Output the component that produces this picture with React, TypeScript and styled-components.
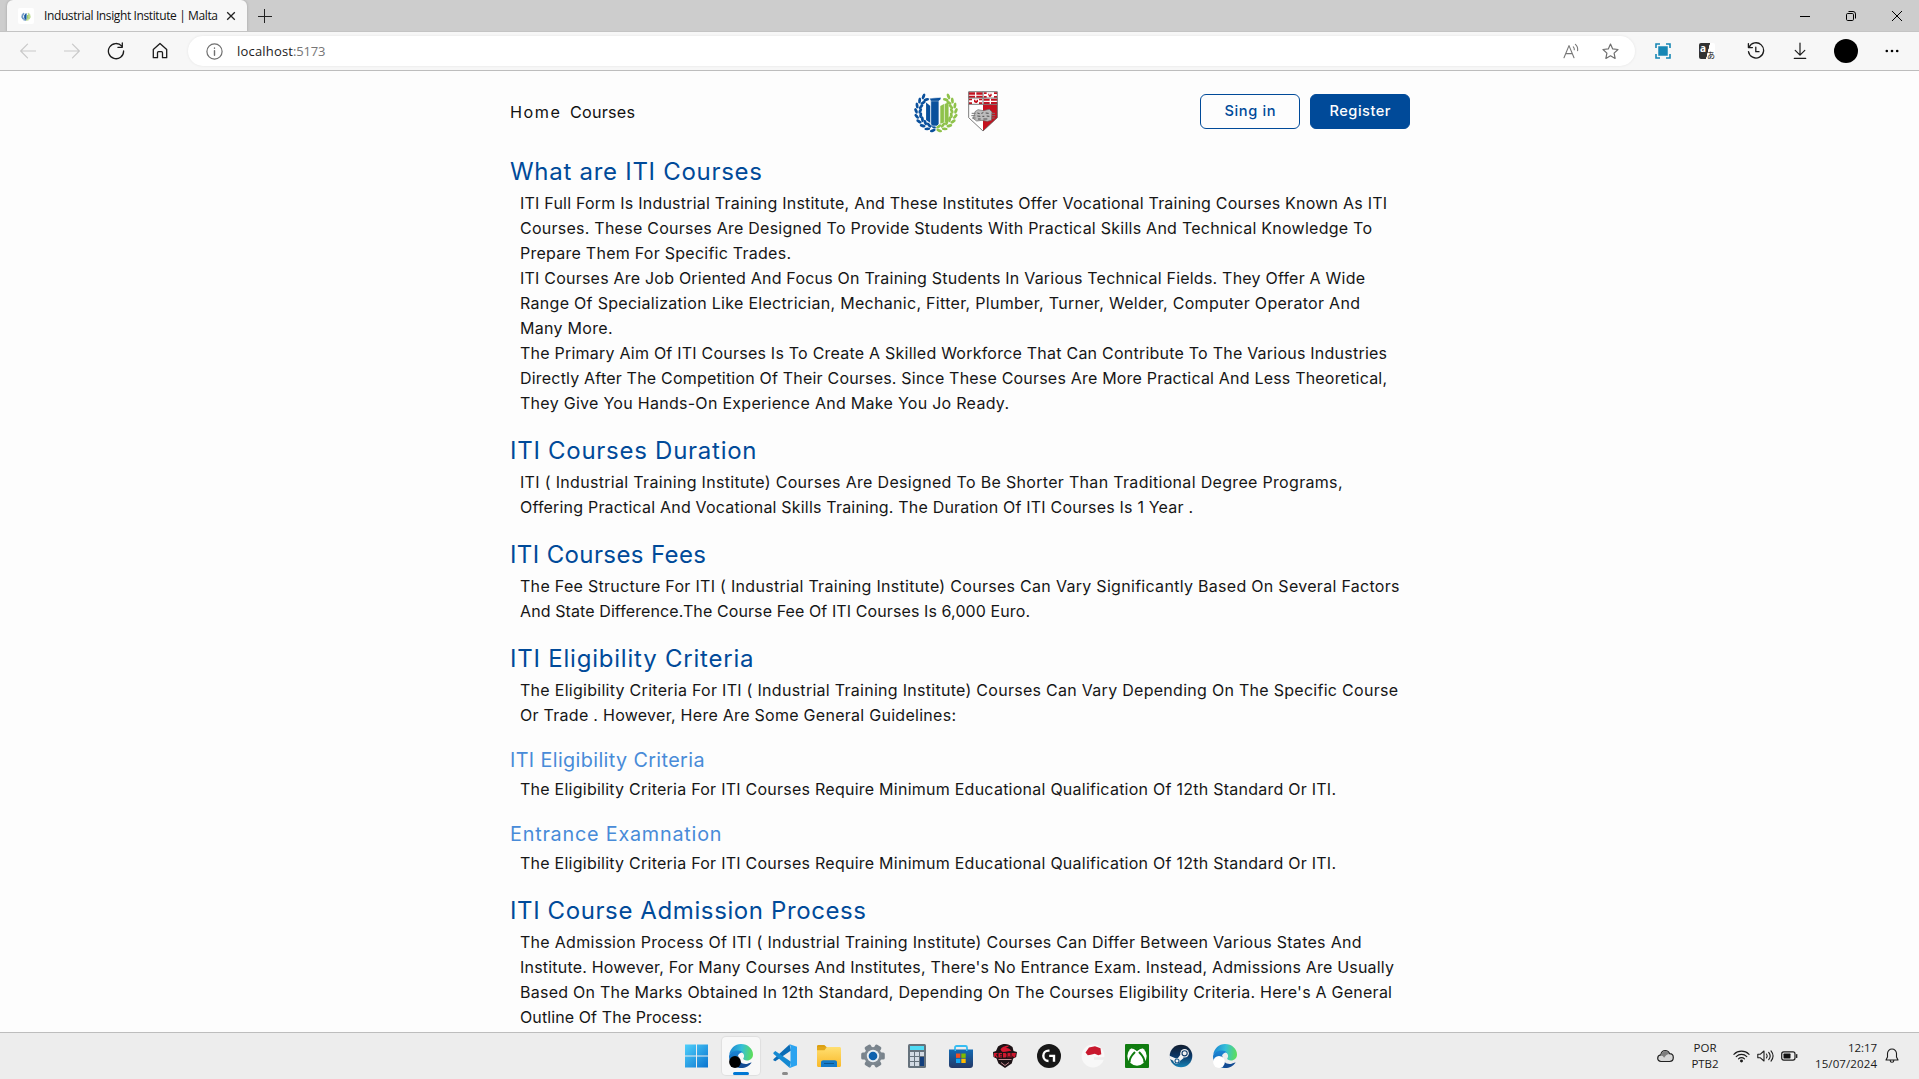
import React, { useLayoutEffect, useRef, useState } from "react";
import styled, { createGlobalStyle } from "styled-components";

const GlobalStyle = createGlobalStyle`
  * { box-sizing: border-box; }
  html, body { margin: 0; padding: 0; overflow: hidden; background: #fdfdfd; }
  svg { display: block; }
`;

const BLUE = "#004a99";
const UI_FONT = `"Open Sans", "Noto Sans", sans-serif`;
const TEXT_FONT = `Inter, "Liberation Sans", sans-serif`;

const Screen = styled.div`
  width: 1919px;
  height: 1079px;
  display: flex;
  flex-direction: column;
  overflow: hidden;
`;

/* ---------- text with a fixed advance width ---------- */

const FitSpan = styled.span`
  display: inline-block;
  white-space: pre;
`;

function Fit({ width, children }: { width: number; children: string }) {
  const ref = useRef<HTMLSpanElement>(null);
  const [spacing, setSpacing] = useState(0);
  useLayoutEffect(() => {
    if (!ref.current) return;
    const natural = ref.current.getBoundingClientRect().width;
    setSpacing((width - natural) / Math.max(1, children.length - 1));
  }, [width, children]);
  return (
    <FitSpan ref={ref} style={{ letterSpacing: spacing, marginRight: -spacing }}>
      {children}
    </FitSpan>
  );
}

/* ---------- browser chrome ---------- */

const TabStrip = styled.div`
  display: flex;
  height: 32px;
  padding-left: 7px;
  background: #cdcdcd;
`;

const Tab = styled.div`
  display: flex;
  align-items: center;
  width: 240px;
  height: 32px;
  padding-left: 11px;
  background: #f7f7f7;
  border-radius: 6px 6px 0 0;
  box-shadow: 0 0 3px rgba(0, 0, 0, 0.22);
  font: 400 12px/16px ${UI_FONT};
  color: #111;
`;

const Favicon = styled.div`
  display: grid;
  place-items: center;
  width: 16px;
  height: 16px;
  margin-right: 10px;
  border-radius: 2px;
  background: #fff;
`;

const TabClose = styled.div`
  margin-left: 8px;
`;

const NewTab = styled.div`
  display: grid;
  place-items: center;
  width: 35px;
  height: 32px;
`;

const WindowButtons = styled.div`
  display: flex;
  margin-left: auto;
  margin-right: -1px;
`;

const WindowButton = styled.div`
  display: grid;
  place-items: center;
  width: 46px;
  height: 32px;
`;

const Toolbar = styled.div`
  display: flex;
  align-items: center;
  height: 39px;
  padding: 0 4px 0 6px;
  background: #f7f7f7;
  border-bottom: 1px solid #bdbdbd;
  box-shadow: 0 -1px 0 #c4c4c4;
`;

const ToolSlot = styled.div<{ $w?: number }>`
  display: grid;
  place-items: center;
  flex: none;
  width: ${(p) => p.$w ?? 44}px;
  height: 36px;
`;

const AddressBar = styled.div`
  display: flex;
  flex: none;
  align-items: center;
  width: 1447px;
  height: 30px;
  margin: 0 6px;
  padding: 0 5px 0 18px;
  border-radius: 15px;
  background: #fff;
  box-shadow: 0 0 3px rgba(0, 0, 0, 0.08);
  font: 400 13px/18px ${UI_FONT};
  color: #1b1b1b;
`;

const Url = styled.div`
  display: flex;
  margin-left: 14px;
`;

const Port = styled.span`
  color: #767676;
`;

const AddressActions = styled.div`
  display: flex;
  margin-left: auto;
`;

const Divider = styled.div`
  width: 1px;
  height: 16px;
  margin: 0 3px 0 2px;
  background: #c8c8c8;
`;

const Avatar = styled.div`
  width: 24px;
  height: 24px;
  border-radius: 50%;
  background: #000;
`;

/* ---------- page ---------- */

const Page = styled.main`
  flex: 1;
  min-height: 0;
  overflow: hidden;
  background: #fdfdfd;
  font-family: ${TEXT_FONT};
`;

const Container = styled.div`
  width: 900px;
  margin: 0 auto 0 510px;
`;

const Header = styled.header`
  display: grid;
  grid-template-columns: 403px 1fr 210px;
  align-items: center;
  height: 81px;
  margin-bottom: 5px;
`;

const Nav = styled.nav`
  display: flex;
  gap: 10px;
  font-size: 16.2px;
  line-height: 20px;
  color: #111;
`;

const Logos = styled.div`
  display: flex;
  align-items: center;
  gap: 9px;
  padding-bottom: 1px;
`;

const Actions = styled.div`
  display: flex;
  gap: 10px;
`;

const Button = styled.button<{ $filled?: boolean }>`
  width: 100px;
  height: 35px;
  padding: 0 0 1px;
  border: 1px solid ${BLUE};
  border-radius: 6px;
  background: ${(p) => (p.$filled ? BLUE : "#fdfdfd")};
  color: ${(p) => (p.$filled ? "#fdfdfd" : BLUE)};
  font: 500 14.6px/18px ${TEXT_FONT};
`;

const Title = styled.h2`
  margin: 0 0 5px;
  height: 29px;
  font-size: 24px;
  line-height: 29px;
  font-weight: 400;
  color: ${BLUE};
`;

const Subtitle = styled.h3`
  margin: 0 0 5px;
  height: 24px;
  font-size: 19.8px;
  line-height: 24px;
  font-weight: 400;
  color: #488bd8;
`;

const Copy = styled.div`
  display: flex;
  flex-direction: column;
  margin-bottom: 20px;
  padding-left: 10px;
  font-size: 16px;
  line-height: 25px;
  color: #161616;
`;

const CopyLine = styled.div`
  height: 25px;
`;

/* ---------- taskbar ---------- */

const Taskbar = styled.footer`
  display: grid;
  grid-template-columns: 675px 572px 1fr;
  height: 47px;
  background: #ededed;
  border-top: 1px solid #bdbdbd;
`;

const Apps = styled.div`
  grid-column: 2;
  display: flex;
  align-items: center;
`;

const AppSlot = styled.div`
  display: grid;
  place-items: center;
  position: relative;
  width: 44px;
  height: 46px;
`;

const AppTile = styled.div<{ $active?: boolean }>`
  display: grid;
  place-items: center;
  width: 38px;
  height: 38px;
  border-radius: 4px;
  background: ${(p) => (p.$active ? "#f8f8f8" : "transparent")};
  box-shadow: ${(p) => (p.$active ? "0 0 1px 1px rgba(0,0,0,0.06)" : "none")};
`;

const Marker = styled.div<{ $active?: boolean }>`
  position: absolute;
  bottom: 4px;
  left: 50%;
  transform: translateX(-50%);
  width: ${(p) => (p.$active ? 16 : 6)}px;
  height: 3px;
  border-radius: 2px;
  background: ${(p) => (p.$active ? "#0078d4" : "#8a8a8a")};
`;

const Tray = styled.div`
  display: flex;
  align-items: center;
  justify-content: flex-end;
  padding-right: 20px;
  font: 400 11.5px/16px ${UI_FONT};
  color: #1a1a1a;
`;

const TrayIcon = styled.div<{ $mr: number }>`
  margin-right: ${(p) => p.$mr}px;
`;

const TrayText = styled.div<{ $align: string; $w: number; $mr: number }>`
  display: flex;
  flex-direction: column;
  align-items: ${(p) => p.$align};
  width: ${(p) => p.$w}px;
  margin-right: ${(p) => p.$mr}px;
`;

/* ---------- logos ---------- */

type Pt = { x: number; y: number; a: number };

function arc(side: 1 | -1): Pt[] {
  const pts: Pt[] = [];
  for (let i = 0; i < 9; i++) {
    const deg = -50 + i * 16.5;
    const t = (deg * Math.PI) / 180;
    pts.push({ x: 167 + side * 54 * Math.cos(t), y: 109 + 52 * Math.sin(t), a: deg });
  }
  return pts;
}

function Wreath({ side, color }: { side: 1 | -1; color: string }) {
  return (
    <g fill={color}>
      {arc(side).map((p, i) => {
        const base = side === 1 ? p.a - 90 : 270 - p.a;
        return (
          <g key={i} transform={`translate(${p.x} ${p.y}) rotate(${base})`}>
            <ellipse cx="4" cy="-5" rx="9" ry="4.400" transform="rotate(-26)" />
            <ellipse cx="4" cy="5" rx="9" ry="4.400" transform="rotate(26)" />
          </g>
        );
      })}
    </g>
  );
}

const InstituteLogo = ({ w = 46, h = 43 }: { w?: number; h?: number }) => (
  <svg width={w} height={h} viewBox="98 44 138 130">
    <Wreath side={-1} color="#0a509c" />
    <Wreath side={1} color="#8fc24b" />
    <path d="M137 82l13 10v52l-13-9z" fill="#0a509c" />
    <path d="M205 81l-12 5v56l12-6zM191 86l-11 6v54l11-4z" fill="#8fc24b" />
    <path d="M147 69l35-3v6l-6 5v70l-6 6h-14l-5-6V78z" fill="#0a509c" stroke="#fdfdfd" strokeWidth="2" />
    <path d="M151 77.500h25" stroke="#fdfdfd" strokeWidth="1" />
  </svg>
);

const ShieldLogo = () => (
  <svg width="30" height="41" viewBox="264 46 90 123">
    <path d="M266 86h43v80l-43-40z" fill="#fff" />
    <path d="M309 86h43v40l-43 40z" fill="#c4121f" />
    <path d="M266 48h86v38h-86z" fill="#fff" />
    <g fill="#c4121f">
      <path d="M266 50h19v7h-19zM289 50h19v7h-19zM266 60h19v6h-19zM289 60h19v6h-19z" />
      <path d="M311 69h18v6h-18zM333 69h19v6h-19zM311 79h18v6h-18zM333 79h19v6h-19z" />
      <path d="M312 50h8v5h-8zM342 50h9v5h-9zM312 61h8v5h-8zM342 61h9v5h-9zM324 54h4v4h3v-4h4v6l-4 4-4-1z" />
      <path d="M267 69h9v5h-9zM297 69h9v5h-9zM267 80h9v5h-9zM297 80h9v5h-9zM282 72h4v3h4v-3h4v6l-4 4-5-1-3-3z" />
    </g>
    <path d="M266 48h86v78l-43 40-43-40zM309 48v38M266 67h86M266 86h86" fill="none" stroke="#5d5d5d" strokeWidth="2.4" />
    <path d="M285 108l9-6 16 3 18-4 8 8-2 25-12 3-16-3-16 2-10-7z" fill="#bdbdbd" stroke="#666" strokeWidth="2" />
    <path d="M275 113h12M274 120h12M276 127h11M335 113h10M336 120h10M334 127h10" stroke="#777" strokeWidth="3" />
    <path d="M292 112l7 2M304 113l6-2M317 112l9 1M292 121l9 1M307 122h6M320 121l8 1M294 130h8M310 130h12" stroke="#4e4e4e" strokeWidth="3" />
  </svg>
);

/* ---------- toolbar icons ---------- */

const line = { fill: "none", stroke: "#1b1b1b", strokeWidth: 1.2, strokeLinecap: "round", strokeLinejoin: "round" } as const;

const BackIcon = () => (
  <svg width="16" height="16" viewBox="0 0 16 16" {...line} stroke="#c9c9c9"><path d="M15.500 8H.8M7.500 1.200L.7 8l6.800 6.800" /></svg>
);
const ForwardIcon = () => (
  <svg width="16" height="16" viewBox="0 0 16 16" {...line} stroke="#c9c9c9"><path d="M.5 8h14.700M8.500 1.200L15.300 8l-6.800 6.800" /></svg>
);
const ReloadIcon = () => (
  <svg width="18" height="18" viewBox="0 0 18 18" {...line} strokeWidth={1.3}><path d="M16.600 9A7.600 7.600 0 1 1 14.800 4.200M15.300.9v4.400h-4.400" /></svg>
);
const HomeIcon = () => (
  <svg width="16" height="18" viewBox="0 0 16 18" {...line} strokeWidth={1.3}><path d="M1.300 7.400L8 1.400l6.700 6v8.300h-4.200v-5a1 1 0 0 0-1-1h-3a1 1 0 0 0-1 1v5H1.300z" /></svg>
);
const InfoIcon = () => (
  <svg width="17" height="17" viewBox="0 0 17 17" {...line} stroke="#6f6f6f"><circle cx="8.500" cy="8.500" r="7.600" /><path d="M8.500 7.600v4.600M8.500 4.900v.3" strokeWidth="1.400" /></svg>
);
const ReadAloudIcon = () => (
  <svg width="17" height="16" viewBox="0 0 17 16" {...line} strokeWidth={1.1} stroke="#777"><path d="M1 14.800L6 2.600l5 12.200M2.800 10.600h6.400M10.300 3.900c.8.800 1.100 1.700 1 2.900M12.400 1.300c1.900 1.700 2.600 3.700 2.200 6.400" /></svg>
);
const StarIcon = () => (
  <svg width="17" height="17" viewBox="0 0 17 17" {...line} stroke="#6f6f6f"><path d="M8.500 1.100l2.200 4.800 5.300.6-3.900 3.600 1 5.300-4.600-2.600-4.600 2.600 1-5.300L1 6.500l5.300-.6z" /></svg>
);
const CaptureIcon = () => (
  <svg width="16" height="16" viewBox="0 0 16 16"><path d="M1 5V1h4M11 1h4v4M15 11v4h-4M5 15H1v-4" fill="none" stroke="#1787b5" strokeWidth="1.600" /><path d="M3.500 3.500h9v9h-9z" fill="#1787b5" stroke="#1787b5" strokeOpacity=".5" /></svg>
);
const TranslateGlyph = styled.div`
  position: relative;
  display: flex;
  width: 16px;
  height: 16px;
  background: linear-gradient(104deg, #333 0 54%, #fff 56%);
  border-radius: 2px;
  font: 700 10px/10px ${UI_FONT};
  color: #fff;
  padding-left: 1px;
`;
const TranslateKana = styled.span`
  position: absolute;
  right: 0;
  bottom: 0;
  font: 500 8px/9px "Noto Sans CJK JP", sans-serif;
  color: #444;
`;
const HistoryIcon = () => (
  <svg width="18" height="18" viewBox="0 0 18 18" {...line} strokeWidth={1.3}><path d="M2.100 5.200A7.600 7.600 0 1 1 1.500 9.600M1.400 1.600v4h4M8.800 5.200v4.500h3.200" /></svg>
);
const DownloadIcon = () => (
  <svg width="14" height="18" viewBox="0 0 14 18" {...line} strokeWidth={1.2}><path d="M7 1v12M2.200 8.400L7 13.200l4.800-4.800M1.300 16.400h11.400" /></svg>
);
const MoreIcon = () => (
  <svg width="14" height="4" viewBox="0 0 14 4"><circle cx="1.800" cy="2" r="1.300" /><circle cx="7" cy="2" r="1.300" /><circle cx="12.200" cy="2" r="1.300" /></svg>
);

/* ---------- taskbar icons ---------- */

const StartIcon = () => (
  <svg width="24" height="24" viewBox="0 0 24 24">
    <defs><linearGradient id="win" x1="0" y1="0" x2="1" y2="1" gradientUnits="objectBoundingBox"><stop offset="0" stopColor="#4fd0fb" /><stop offset="1" stopColor="#0a73cf" /></linearGradient></defs>
    <path d="M0 .6h11v11H0zM12 .6h11v11H12zM0 12.500h11v11H0zM12 12.500h11v11H12z" fill="url(#win)" />
  </svg>
);
const EdgeIcon = ({ id, dot }: { id: string; dot: string }) => (
  <svg width="24" height="24" viewBox="0 0 24 24">
    <defs>
      <linearGradient id={`${id}a`} x1="0" y1=".4" x2="1" y2=".5"><stop offset="0" stopColor="#1a86d2" /><stop offset=".5" stopColor="#35bfd8" /><stop offset="1" stopColor="#5ede58" /></linearGradient>
      <linearGradient id={`${id}b`} x1="0" y1="0" x2="0" y2="1"><stop offset="0" stopColor="#1c86d6" /><stop offset="1" stopColor="#0c5aa8" /></linearGradient>
    </defs>
    <path d="M.3 10.800C1 4.600 5.900 0 12 0c7 0 12 4.900 12 10.400 0 3.500-2.600 6-6 6-2.600 0-3.800-1-3.800-1.700 0-.6.9-1 .9-2.800 0-2.500-2.500-4.400-6-4.400-4.500 0-7.900 1.500-8.800 3.300z" fill={`url(#${id}a)`} />
    <path d="M0 12.500C.2 8.900 4 6.500 8.800 6.500c2.300 0 4.200.7 5.300 2-3-.6-5.700 2.200-5.700 5.900 0 5.300 5.300 8 10.100 7.100A12 12 0 0 1 12 24C5.300 24 0 18.900 0 12.500z" fill={`url(#${id}b)`} />
    <path d="M9.600 11.500c-1.700 5 3.400 9.500 9 8.200 1.600-.4 2.700-1 3.400-1.200.4-.1.600.2.300.6A12 12 0 0 1 12 24c-5-1-6.500-8.500-2.400-12.500z" fill="#134c94" />
    <circle cx="6" cy="18" r="5.900" fill={dot} />
  </svg>
);
const CodeIcon = () => (
  <svg width="24" height="24" viewBox="0 0 24 24">
    <path d="M.4 15.200L16.500.4 18 6.400 2.300 17.200.4 16.300z" fill="#0b6cb5" />
    <path d="M.4 8.700L2.300 7 18 17.800 16.500 23.700.4 9.800z" fill="#158ad2" />
    <path d="M16.800.2L24 2.800v18.400l-7.200 2.700c-.5.1-.6-.2-.3-.6.7-.5 1-1 1-2V3c0-1-.3-1.600-1-2.200z" fill="#2ba3f0" />
  </svg>
);
const FolderIcon = () => (
  <svg width="24" height="22" viewBox="0 0 24 22">
    <defs><linearGradient id="fold" x1="0" y1="0" x2="0" y2="1"><stop offset="0" stopColor="#ffdf71" /><stop offset="1" stopColor="#f9b92a" /></linearGradient></defs>
    <path d="M0 1.400C0 .6.600 0 1.400 0h6L10 2.500H0z" fill="#dca011" /><path d="M0 2h10v4H0z" fill="#e2a71a" />
    <path d="M0 5.300h7.500l2.300-3.200h12.700c.9 0 1.500.6 1.500 1.500V20.500c0 .9-.6 1.500-1.500 1.500h-21C.6 22 0 21.400 0 20.500z" fill="url(#fold)" />
    <path d="M4 22v-4.500c0-1.400 1-2.300 2.300-2.300h11.400c1.300 0 2.300.9 2.300 2.300V22z" fill="#157bc8" /><path d="M7 18.500h10" stroke="#0a568f" />
  </svg>
);
const GearIcon = () => (
  <svg width="24" height="24" viewBox="0 0 24 24">
    {[0, 60, 120].map((a) => (
      <rect key={a} x="8.500" y=".2" width="7" height="23.600" rx="1.600" fill="#79838c" transform={`rotate(${a + 30} 12 12)`} />
    ))}
    <circle cx="12" cy="12" r="9" fill="#7d8790" /><circle cx="12" cy="12" r="6.200" fill="#e9eef2" /><circle cx="12" cy="12" r="4.300" fill="#0f62ae" />
  </svg>
);
const CalcIcon = () => (
  <svg width="18" height="24" viewBox="0 0 18 24">
    <rect width="18" height="24" rx="1.500" fill="#66727c" /><rect x="2" y="2" width="14" height="4" fill="#4fdcf5" />
    {[0, 1, 2].map((r) => [0, 1, 2].map((c) => (
      <rect key={`${r}${c}`} x={2 + c * 5} y={8 + r * 5} width="4" height="4" fill={c === 2 && r > 0 ? "#123f7d" : "#d2dae3"} />
    )))}
    <rect x="12" y="13" width="4" height="9" fill="#123f7d" />
  </svg>
);
const StoreIcon = () => (
  <svg width="24" height="24" viewBox="0 0 24 24">
    <defs><linearGradient id="store" x1="0" y1="0" x2="0" y2="1"><stop offset="0" stopColor="#126ab4" /><stop offset="1" stopColor="#243866" /></linearGradient></defs>
    <path d="M6 7V3.500C6 2.500 6.700 2 7.500 2h9c.8 0 1.500.5 1.500 1.500V7" fill="none" stroke="#36bdf2" strokeWidth="1.800" />
    <path d="M0 5.500h24V21c0 1.700-1.100 3-3 3H3c-1.900 0-3-1.300-3-3z" fill="url(#store)" />
    <path d="M5.500 5H7v2H5.500zM17 5h1.500v2H17z" fill="#36bdf2" />
    <path d="M7 9.500h4.400v4.400H7z" fill="#f25022" /><path d="M12.300 9.500h4.400v4.400h-4.400z" fill="#7fba00" /><path d="M7 14.700h4.400v4.300H7z" fill="#16a6f0" /><path d="M12.300 14.700h4.400v4.300h-4.400z" fill="#ffb900" />
  </svg>
);
const RedragonIcon = () => (
  <svg width="24" height="24" viewBox="0 0 24 24">
    <path d="M5 2.500C8 .3 10 0 12 0c3 0 5 1 7.500 3l1 4 3.500 1-.8 5-3 1.500-1.500 5L12 24l-6.500-4.500-2-5L.5 13 0 8l3-1z" fill="#1d1316" />
    <path d="M7.500 5.500C9.500 2 13.500 2 16 1.500c-.5 1.800-2 1.600-3.500 2.500C15 3.500 17.500 5 18.500 7.300 15 6.300 13.800 8.300 9 7.800z" fill="#d81932" />
    <path d="M1 9h3.500v1L3 10.500l2 3H3.500L2 11.600V13H1zM5.500 9H9v1H7v.7h2v1H7v.7h2v1H5.500zM10 9h2.500l1 1v2.500l-1 .9H10zM14.500 9h3v4.400h-1V12h-1v1.400h-1zM18.500 9H23l-1 4.400h-1l-1.700-2v2h-.8z" fill="#d0172e" />
    <path d="M5.500 15.500h13M8 18.500l4 3 4-3" fill="none" stroke="#c68a92" strokeWidth="1" />
  </svg>
);
const LogitechIcon = () => (
  <svg width="24" height="24" viewBox="0 0 24 24"><circle cx="12" cy="12" r="12" fill="#181818" /><path d="M12.500 6.600h-1A5.200 5.200 0 0 0 11.500 17M12.200 11.900h4.800v5.800" fill="none" stroke="#fff" strokeWidth="2.400" /></svg>
);
const RedHatIcon = () => (
  <svg width="24" height="24" viewBox="0 0 24 24"><circle cx="12" cy="12" r="11.400" fill="#f8f8f8" /><path d="M13 14.500h11" stroke="#ededed" strokeWidth="2.500" /><path d="M4.500 8.500L8 3.500l6-1.200 5.500 2 .8 6-3 1-3.500-1.500-4 1-3 .5z" fill="#c8182d" /></svg>
);
const XboxIcon = () => (
  <svg width="24" height="24" viewBox="0 0 24 24"><rect width="24" height="24" rx="1" fill="#107c10" /><circle cx="12" cy="12" r="9.700" fill="#fff" /><path d="M6.500 3.500c2 0 4 1.200 5.500 2.400 1.500-1.200 3.500-2.400 5.500-2.400M10 8C6.500 11.500 4 15.500 4.600 18.600M14 8c3.500 3.500 6 7.500 5.400 10.600" fill="none" stroke="#107c10" strokeWidth="2" /><path d="M7 2.600L12 5.300l5-2.700-5-1.700z" fill="#107c10" /></svg>
);
const SteamIcon = () => (
  <svg width="24" height="24" viewBox="0 0 24 24">
    <defs><linearGradient id="steam" x1="0" y1="0" x2="0" y2="1"><stop offset="0" stopColor="#111d2e" /><stop offset=".5" stopColor="#0c3766" /><stop offset="1" stopColor="#1683b6" /></linearGradient></defs>
    <circle cx="12" cy="12" r="11.300" fill="url(#steam)" />
    <path d="M0 11.600l7 2.800 2-.5 3.200-4.500 2.500 4.500-3.700 3-1 2-2.500 1-2.500-1.200-.8-2L.9 15z" fill="#f3f3f3" />
    <circle cx="15.600" cy="9.300" r="4.300" fill="#f3f3f3" /><circle cx="15.600" cy="9.300" r="2.600" fill="none" stroke="#103a68" strokeWidth="1.100" /><circle cx="8" cy="17" r="2" fill="none" stroke="#13558a" strokeWidth="1.100" />
  </svg>
);

const dark = { fill: "none", stroke: "#1c1c1c", strokeWidth: 1.1, strokeLinecap: "round", strokeLinejoin: "round" } as const;

const CloudIcon = () => (
  <svg width="17" height="14" viewBox="0 0 17 14"><path d="M4 12.500C2 12.500.7 11 .7 9.200S2 6 3.800 5.800C4.200 3.200 6 1.500 8.300 1.500c2 0 3.600 1.200 4.300 3.200 2.200 0 3.700 1.800 3.700 3.900 0 2.300-1.600 3.900-3.700 3.900z" fill="#d6d6d6" stroke="#222" strokeWidth="1.200" /><path d="M3.900 6.500C4.600 3.500 6.500 2 8.300 2c1.700 0 3.200 1 3.800 3-2.400.4-3.700 2-5 3.700C6.300 7.200 5 6.500 3.900 6.500z" fill="#7d7d7d" /></svg>
);
const WifiIcon = () => (
  <svg width="17" height="14" viewBox="0 0 17 14" {...dark}><path d="M.9 5.300a10.800 10.800 0 0 1 15.200 0M3.200 7.600a7.500 7.500 0 0 1 10.600 0M5.500 9.900a4.200 4.200 0 0 1 6 0" /><circle cx="8.500" cy="12" r=".9" fill="#1c1c1c" /></svg>
);
const SpeakerIcon = () => (
  <svg width="17" height="14" viewBox="0 0 17 14" {...dark}><path d="M.8 5.200v3.600h2.600L7 12V2L3.400 5.200zM9.400 5c.9 1.200.9 2.800 0 4M11.700 3.400c1.800 2.200 1.800 5 0 7.200M14 1.900c2.600 3.200 2.600 7 0 10.200" /></svg>
);
const BatteryIcon = () => (
  <svg width="17" height="10" viewBox="0 0 17 10"><rect x=".7" y=".9" width="13.300" height="8.200" rx="2" fill="none" stroke="#1c1c1c" strokeWidth="1.200" /><rect x="2.500" y="2.600" width="7" height="4.800" rx=".6" fill="#111" /><path d="M15.700 3.600v2.800" stroke="#1c1c1c" strokeWidth="1.300" strokeLinecap="round" /></svg>
);
const BellIcon = () => (
  <svg width="14" height="16" viewBox="0 0 14 16" {...dark}><path d="M7 1a4.500 4.500 0 0 0-4.500 4.500V9L1 12h12l-1.500-3V5.500A4.500 4.500 0 0 0 7 1zM5.200 12.500a1.800 1.800 0 0 0 3.600 0" /></svg>
);

/* ---------- content ---------- */

type Block = { title: string; width: number; sub?: boolean; lines: [string, number][] };

const blocks: Block[] = [
  {
    title: "What are ITI Courses", width: 252,
    lines: [
      ["ITI Full Form Is Industrial Training Institute, And These Institutes Offer Vocational Training Courses Known As ITI", 867],
      ["Courses. These Courses Are Designed To Provide Students With Practical Skills And Technical Knowledge To", 852],
      ["Prepare Them For Specific Trades.", 271],
      ["ITI Courses Are Job Oriented And Focus On Training Students In Various Technical Fields. They Offer A Wide", 845],
      ["Range Of Specialization Like Electrician, Mechanic, Fitter, Plumber, Turner, Welder, Computer Operator And", 840],
      ["Many More.", 92.5],
      ["The Primary Aim Of ITI Courses Is To Create A Skilled Workforce That Can Contribute To The Various Industries", 867],
      ["Directly After The Competition Of Their Courses. Since These Courses Are More Practical And Less Theoretical,", 867],
      ["They Give You Hands-On Experience And Make You Jo Ready.", 489],
    ],
  },
  {
    title: "ITI Courses Duration", width: 246.5,
    lines: [
      ["ITI ( Industrial Training Institute) Courses Are Designed To Be Shorter Than Traditional Degree Programs,", 822.5],
      ["Offering Practical And Vocational Skills Training. The Duration Of ITI Courses Is 1 Year .", 673],
    ],
  },
  {
    title: "ITI Courses Fees", width: 196,
    lines: [
      ["The Fee Structure For ITI ( Industrial Training Institute) Courses Can Vary Significantly Based On Several Factors", 879.5],
      ["And State Difference.The Course Fee Of ITI Courses Is 6,000 Euro.", 510],
    ],
  },
  {
    title: "ITI Eligibility Criteria", width: 243.5,
    lines: [
      ["The Eligibility Criteria For ITI ( Industrial Training Institute) Courses Can Vary Depending On The Specific Course", 878],
      ["Or Trade . However, Here Are Some General Guidelines:", 436],
    ],
  },
  {
    title: "ITI Eligibility Criteria", width: 194.5, sub: true,
    lines: [["The Eligibility Criteria For ITI Courses Require Minimum Educational Qualification Of 12th Standard Or ITI.", 816]],
  },
  {
    title: "Entrance Examnation", width: 211.5, sub: true,
    lines: [["The Eligibility Criteria For ITI Courses Require Minimum Educational Qualification Of 12th Standard Or ITI.", 816]],
  },
  {
    title: "ITI Course Admission Process", width: 356,
    lines: [
      ["The Admission Process Of ITI ( Industrial Training Institute) Courses Can Differ Between Various States And", 841.5],
      ["Institute. However, For Many Courses And Institutes, There's No Entrance Exam. Instead, Admissions Are Usually", 874],
      ["Based On The Marks Obtained In 12th Standard, Depending On The Courses Eligibility Criteria. Here's A General", 872],
      ["Outline Of The Process:", 182],
    ],
  },
];

const apps: { icon: React.ReactNode; state?: "active" | "open" }[] = [
  { icon: <StartIcon /> },
  { icon: <EdgeIcon id="e1" dot="#000" />, state: "active" },
  { icon: <CodeIcon />, state: "open" },
  { icon: <FolderIcon /> },
  { icon: <GearIcon /> },
  { icon: <CalcIcon /> },
  { icon: <StoreIcon /> },
  { icon: <RedragonIcon /> },
  { icon: <LogitechIcon /> },
  { icon: <RedHatIcon /> },
  { icon: <XboxIcon /> },
  { icon: <SteamIcon /> },
  { icon: <EdgeIcon id="e2" dot="#fff" /> },
];

export default function App() {
  return (
    <Screen>
      <GlobalStyle />
      <TabStrip>
        <Tab>
          <Favicon><InstituteLogo w={10} h={9} /></Favicon>
          <Fit width={174}>Industrial Insight Institute | Malta</Fit>
          <TabClose>
            <svg width="10" height="10" viewBox="0 0 10 10"><path d="M1.200 1.200l7.600 7.600M8.800 1.200L1.200 8.800" stroke="#222" strokeWidth="1.300" /></svg>
          </TabClose>
        </Tab>
        <NewTab>
          <svg width="14" height="14" viewBox="0 0 14 14"><path d="M6.500 0v14M0 7.500h14" stroke="#222" /></svg>
        </NewTab>
        <WindowButtons>
          <WindowButton><svg width="10" height="10" viewBox="0 0 10 10"><path d="M0 5.500h10" stroke="#000" /></svg></WindowButton>
          <WindowButton><svg width="10" height="10" viewBox="0 0 10 10" fill="none" stroke="#000"><rect x=".5" y="2.500" width="7" height="7" rx="1.200" /><path d="M2.500.5H7A2.500 2.500 0 0 1 9.500 3v4.500" /></svg></WindowButton>
          <WindowButton><svg width="10" height="10" viewBox="0 0 10 10"><path d="M0 0l10 10M10 0L0 10" stroke="#000" /></svg></WindowButton>
        </WindowButtons>
      </TabStrip>
      <Toolbar>
        <ToolSlot><BackIcon /></ToolSlot>
        <ToolSlot><ForwardIcon /></ToolSlot>
        <ToolSlot><ReloadIcon /></ToolSlot>
        <ToolSlot><HomeIcon /></ToolSlot>
        <AddressBar>
          <InfoIcon />
          <Url>
            <Fit width={56}>localhost</Fit>
            <Port><Fit width={32.5}>:5173</Fit></Port>
          </Url>
          <AddressActions>
            <ToolSlot $w={39}><ReadAloudIcon /></ToolSlot>
            <ToolSlot $w={39}><StarIcon /></ToolSlot>
          </AddressActions>
        </AddressBar>
        <ToolSlot><CaptureIcon /></ToolSlot>
        <ToolSlot><TranslateGlyph>a<TranslateKana>あ</TranslateKana></TranslateGlyph></ToolSlot>
        <Divider />
        <ToolSlot><HistoryIcon /></ToolSlot>
        <ToolSlot><DownloadIcon /></ToolSlot>
        <ToolSlot $w={47}><Avatar /></ToolSlot>
        <ToolSlot $w={46}><MoreIcon /></ToolSlot>
      </Toolbar>
      <Page>
        <Container>
          <Header>
            <Nav>
              <Fit width={50}>Home</Fit>
              <Fit width={65}>Courses</Fit>
            </Nav>
            <Logos>
              <InstituteLogo />
              <ShieldLogo />
            </Logos>
            <Actions>
              <Button><Fit width={51}>Sing in</Fit></Button>
              <Button $filled><Fit width={61}>Register</Fit></Button>
            </Actions>
          </Header>
          {blocks.map((b, i) => (
            <section key={i}>
              {b.sub ? <Subtitle><Fit width={b.width}>{b.title}</Fit></Subtitle> : <Title><Fit width={b.width}>{b.title}</Fit></Title>}
              <Copy>
                {b.lines.map(([text, w]) => (
                  <CopyLine key={text}><Fit width={w}>{text}</Fit></CopyLine>
                ))}
              </Copy>
            </section>
          ))}
        </Container>
      </Page>
      <Taskbar>
        <Apps>
          {apps.map((a, i) => (
            <AppSlot key={i}>
              <AppTile $active={a.state === "active"}>{a.icon}</AppTile>
              {a.state && <Marker $active={a.state === "active"} />}
            </AppSlot>
          ))}
        </Apps>
        <Tray>
          <TrayIcon $mr={15}><CloudIcon /></TrayIcon>
          <TrayText $align="center" $w={32} $mr={12}>
            <Fit width={23}>POR</Fit>
            <Fit width={27}>PTB2</Fit>
          </TrayText>
          <TrayIcon $mr={7}><WifiIcon /></TrayIcon>
          <TrayIcon $mr={7}><SpeakerIcon /></TrayIcon>
          <TrayIcon $mr={16}><BatteryIcon /></TrayIcon>
          <TrayText $align="flex-end" $w={63} $mr={8}>
            <Fit width={29}>12:17</Fit>
            <Fit width={62}>15/07/2024</Fit>
          </TrayText>
          <BellIcon />
        </Tray>
      </Taskbar>
    </Screen>
  );
}
